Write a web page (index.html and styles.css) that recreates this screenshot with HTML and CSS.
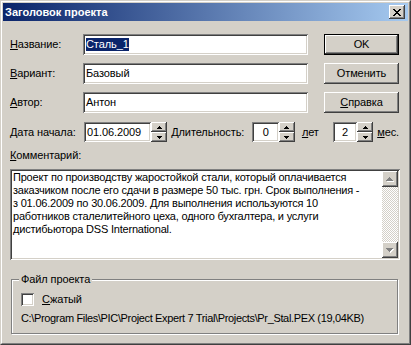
FILE: index.html
```html
<!doctype html>
<html>
<head>
	<title>Заголовок проекта</title>
	<link rel="stylesheet" href="styles.css">
</head>

<body>
<div class="window">
<div class="frame">
	<div class="titlebar">
		<span class="title">Заголовок проекта</span>
		<span class="close raised">
			<svg width="8" height="7" viewBox="0 0 8 7" shape-rendering="crispEdges"><path fill="#000" d="M0 0h2v1H0zM6 0h2v1H6zM1 1h2v1H1zM5 1h2v1H5zM2 2h4v1H2zM3 3h2v1H3zM2 4h4v1H2zM1 5h2v1H1zM5 5h2v1H5zM0 6h2v1H0zM6 6h2v1H6z"/></svg>
		</span>
	</div>

	<div class="body">
		<div class="top">
			<div class="fields">
				<div class="row">
					<span class="label"><u>Н</u>азвание:</span>
					<div class="edit wide"><span class="sel">Сталь_1</span></div>
				</div>
				<div class="row">
					<span class="label"><u>В</u>ариант:</span>
					<div class="edit wide">Базовый</div>
				</div>
				<div class="row">
					<span class="label"><u>А</u>втор:</span>
					<div class="edit wide">Антон</div>
				</div>
			</div>
			<div class="buttons">
				<div class="button default"><span class="raised">OK</span></div>
				<div class="button raised">Отменить</div>
				<div class="button raised"><span><u>С</u>правка</span></div>
			</div>
		</div>

		<div class="daterow">
			<span class="label date-label"><u>Д</u>ата начала:</span>
			<div class="edit date">01.06.2009</div>
			<div class="spin">
				<span class="raised"><svg width="5" height="3" viewBox="0 0 5 3" shape-rendering="crispEdges"><path d="M2 0h1v1H2zM1 1h3v1H1zM0 2h5v1H0z"/></svg></span>
				<span class="raised"><svg width="5" height="3" viewBox="0 0 5 3" shape-rendering="crispEdges"><path d="M0 0h5v1H0zM1 1h3v1H1zM2 2h1v1H2z"/></svg></span>
			</div>
			<span class="dur-label">Длительность:</span>
			<div class="edit num years">0</div>
			<div class="spin">
				<span class="raised"><svg width="5" height="3" viewBox="0 0 5 3" shape-rendering="crispEdges"><path d="M2 0h1v1H2zM1 1h3v1H1zM0 2h5v1H0z"/></svg></span>
				<span class="raised"><svg width="5" height="3" viewBox="0 0 5 3" shape-rendering="crispEdges"><path d="M0 0h5v1H0zM1 1h3v1H1zM2 2h1v1H2z"/></svg></span>
			</div>
			<span class="unit-years"><u>л</u>ет</span>
			<div class="edit num months">2</div>
			<div class="spin">
				<span class="raised"><svg width="5" height="3" viewBox="0 0 5 3" shape-rendering="crispEdges"><path d="M2 0h1v1H2zM1 1h3v1H1zM0 2h5v1H0z"/></svg></span>
				<span class="raised"><svg width="5" height="3" viewBox="0 0 5 3" shape-rendering="crispEdges"><path d="M0 0h5v1H0zM1 1h3v1H1zM2 2h1v1H2z"/></svg></span>
			</div>
			<span class="unit-months"><u>м</u>ес.</span>
		</div>

		<div class="comment-label"><u>К</u>омментарий:</div>
		<div class="memo">
			<div class="memo-text">
				Проект по производству жаростойкой стали, который оплачивается<br>
				заказчиком после его сдачи в размере 50 тыс. грн. Срок выполнения -<br>
				з 01.06.2009 по 30.06.2009. Для выполнения используются 10<br>
				работников сталелитейного цеха, одного бухгалтера, и услуги<br>
				дистибьютора DSS International.
			</div>
			<div class="scrollbar">
				<span class="raised arrow"><svg width="8" height="5" viewBox="0 0 8 5" shape-rendering="crispEdges"><path fill="#fff" d="M4 1h1v1H4zM3 2h3v1H3zM2 3h5v1H2zM1 4h7v1H1z"/><path fill="#808080" d="M3 0h1v1H3zM2 1h3v1H2zM1 2h5v1H1zM0 3h7v1H0z"/></svg></span>
				<span class="track"></span>
				<span class="raised arrow"><svg width="8" height="5" viewBox="0 0 8 5" shape-rendering="crispEdges"><path fill="#fff" d="M1 1h7v1H1zM2 2h5v1H2zM3 3h3v1H3zM4 4h1v1H4z"/><path fill="#808080" d="M0 0h7v1H0zM1 1h5v1H1zM2 2h3v1H2zM3 3h1v1H3z"/></svg></span>
			</div>
		</div>

		<div class="group">
			<span class="group-title">Файл проекта</span>
			<div class="check-row">
				<span class="checkbox"></span>
				<span class="check-label"><u>С</u>жатый</span>
			</div>
			<div class="path">C:\Program Files\PIC\Project Expert 7 Trial\Projects\Pr_Stal.PEX (19,04KB)</div>
		</div>
	</div>
</div>
</div>
</body>
</html>
```

FILE: styles.css
```css
body {
	margin: 0;
	font: 11px/13px "Liberation Sans", Arial, sans-serif;
	color: #000;
	letter-spacing: -0.1px;
}

u { text-decoration: underline; text-underline-offset: 1px; }

/* window frame */
.window {
	width: 411px;
	height: 345px;
	box-sizing: border-box;
	border: 1px solid;
	border-color: #d4d0c8 #404040 #404040 #d4d0c8;
	background: #d4d0c8;
}
.frame {
	height: 100%;
	box-sizing: border-box;
	border: 1px solid;
	border-color: #fff #808080 #808080 #fff;
	padding: 1px;
}

.raised {
	background: #d4d0c8;
	box-shadow: inset -1px -1px #404040, inset 1px 1px #fff, inset -2px -2px #808080, inset 2px 2px #d4d0c8;
}

.titlebar {
	height: 18px;
	display: flex;
	align-items: center;
	padding: 0 3px 0 2px;
	background: linear-gradient(to right, #0a246a, #a6caf0);
}
.title { flex: 1; color: #fff; font-weight: bold; letter-spacing: 0; }
.close {
	width: 16px;
	height: 14px;
	display: flex;
	align-items: center;
	justify-content: center;
}

.body { padding: 13px 9px 0 7px; }

/* name / variant / author */
.top { display: flex; }
.fields { width: 298px; display: flex; flex-direction: column; gap: 8px; }
.row { display: flex; align-items: center; height: 21px; }
.label { width: 73px; flex: none; }

.edit {
	box-sizing: border-box;
	height: 21px;
	display: flex;
	align-items: center;
	padding-left: 3px;
	background: #fff;
	box-shadow: inset 1px 1px #808080, inset -1px -1px #fff, inset 2px 2px #404040, inset -2px -2px #d4d0c8;
	white-space: nowrap;
}
.wide { width: 225px; }
.sel { background: #0a246a; color: #fff; }

.buttons { margin-left: 16px; display: flex; flex-direction: column; gap: 8px; }
.button {
	width: 75px;
	height: 21px;
	box-sizing: border-box;
	display: flex;
	align-items: center;
	justify-content: center;
}
.button.default { border: 1px solid #000; }
.button.default .raised {
	width: 100%;
	height: 100%;
	display: flex;
	align-items: center;
	justify-content: center;
}

/* date and duration */
.daterow { display: flex; align-items: center; margin-top: 9px; height: 20px; }
.daterow .edit { height: 20px; }
.date-label { width: 74px; }
.date { width: 68px; }
.num { justify-content: center; padding-left: 0; }
.years { width: 27px; }
.months { width: 25px; }
.spin { width: 16px; height: 20px; display: flex; flex-direction: column; }
.spin span { flex: 1; display: flex; align-items: center; justify-content: center; }
.dur-label { margin-left: 4px; width: 82px; }
.unit-years { margin-left: 7px; width: 31px; }
.unit-months { margin-left: 4px; }

/* comment */
.comment-label { margin-top: 7px; }
.memo {
	margin-top: 7px;
	width: 390px;
	height: 91px;
	box-sizing: border-box;
	padding: 2px;
	display: flex;
	background: #fff;
	box-shadow: inset 1px 1px #808080, inset -1px -1px #fff, inset 2px 2px #404040, inset -2px -2px #d4d0c8;
}
.memo-text { flex: 1; padding-left: 1px; white-space: nowrap; overflow: hidden; letter-spacing: -0.2px; }
.scrollbar { width: 16px; display: flex; flex-direction: column; }
.arrow { height: 16px; display: flex; align-items: center; justify-content: center; }
.track { flex: 1; background: repeating-conic-gradient(#d4d0c8 0 25%, #fff 0 50%) 0 0 / 2px 2px; }

/* project file group */
.group {
	position: relative;
	margin: 19px 0 0 1px;
	width: 387px;
	height: 55px;
	box-sizing: border-box;
	padding: 13px 0 0 9px;
	border: 1px solid #808080;
	box-shadow: 1px 1px #fff, inset 1px 1px #fff;
}
.group-title {
	position: absolute;
	top: -7px;
	left: 7px;
	padding: 0 2px;
	background: #d4d0c8;
}
.check-row { display: flex; align-items: center; height: 13px; }
.checkbox {
	width: 13px;
	height: 13px;
	box-sizing: border-box;
	background: #fff;
	box-shadow: inset 1px 1px #808080, inset -1px -1px #fff, inset 2px 2px #404040, inset -2px -2px #d4d0c8;
}
.check-label { margin-left: 8px; }
.path { margin-top: 6px; white-space: nowrap; letter-spacing: -0.35px; }
```
